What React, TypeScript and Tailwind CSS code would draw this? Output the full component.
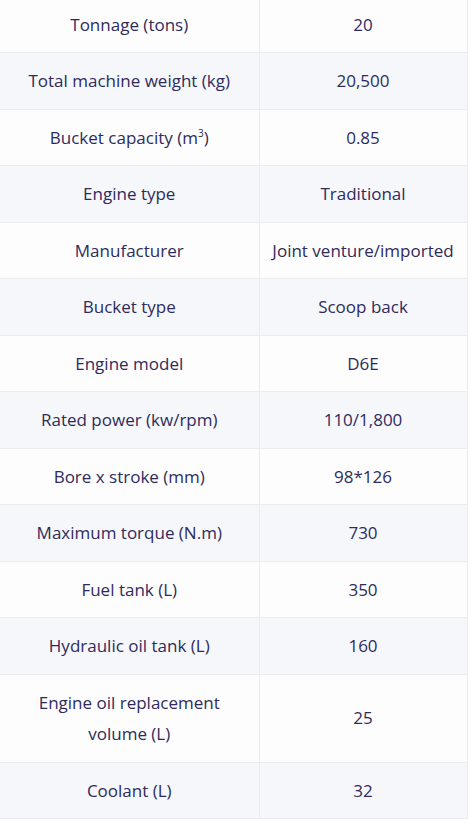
import React from "react";

type Spec = { label: React.ReactNode; value: string };

const specs: Spec[] = [
  { label: "Tonnage (tons)", value: "20" },
  { label: "Total machine weight (kg)", value: "20,500" },
  {
    label: (
      <>
        Bucket capacity (m<sup className="text-[10px] -top-[7px]">3</sup>)
      </>
    ),
    value: "0.85",
  },
  { label: "Engine type", value: "Traditional" },
  { label: "Manufacturer", value: "Joint venture/imported" },
  { label: "Bucket type", value: "Scoop back" },
  { label: "Engine model", value: "D6E" },
  { label: "Rated power (kw/rpm)", value: "110/1,800" },
  { label: "Bore x stroke (mm)", value: "98*126" },
  { label: "Maximum torque (N.m)", value: "730" },
  { label: "Fuel tank (L)", value: "350" },
  { label: "Hydraulic oil tank (L)", value: "160" },
  { label: "Engine oil replacement volume (L)", value: "25" },
  { label: "Coolant (L)", value: "32" },
];

export default function App() {
  return (
    <div className="min-h-[825px] bg-white overflow-hidden font-['Open_Sans','Noto_Sans',sans-serif] text-[17px] text-[#2e2b5c]">
      <table className="w-[467px] -mt-[4.5px] border-collapse table-fixed">
        <colgroup>
          <col className="w-[259px]" />
          <col className="w-[208px]" />
        </colgroup>
        <tbody>
          {specs.map((row, i) => (
            <tr key={i} className={i % 2 === 1 ? "bg-[#f6f7fb]" : "bg-[#fdfdfd]"}>
              <td className="border border-[#ebecf0] border-l-0 px-6 py-3 text-center leading-[31.5px]">
                {row.label}
              </td>
              <td className="border border-[#ebecf0] px-1 py-3 text-center leading-[31.5px]">
                {row.value}
              </td>
            </tr>
          ))}
        </tbody>
      </table>
    </div>
  );
}
